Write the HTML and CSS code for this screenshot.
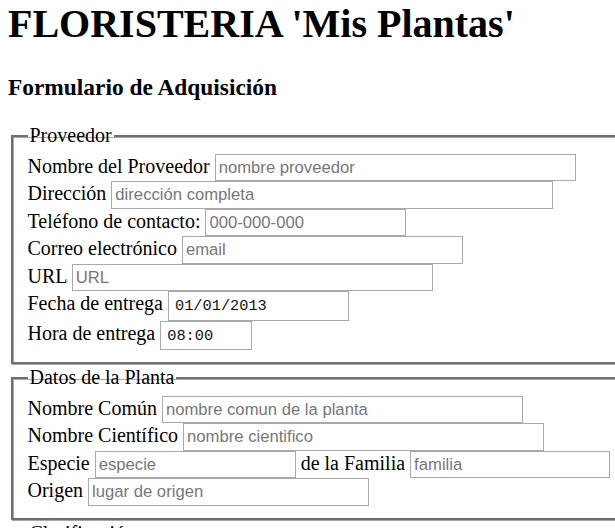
FILE: index.html
```html
<!DOCTYPE html>
<html lang="es">
<head>
<meta charset="utf-8">
<title>FLORISTERIA 'Mis Plantas'</title>
<link rel="stylesheet" href="styles.css">
</head>
<body>
<h1 class="title">FLORISTERIA 'Mis Plantas'</h1>
<h3 class="subtitle">Formulario de Adquisición</h3>
<form class="form">
  <fieldset class="group">
    <legend class="legend">Proveedor</legend>
    <div class="row">Nombre del Proveedor <input class="field w40" type="text" placeholder="nombre proveedor"></div>
    <div class="row">Dirección <input class="field w50" type="text" placeholder="dirección completa"></div>
    <div class="row">Teléfono de contacto: <input class="field w20" type="text" placeholder="000-000-000"></div>
    <div class="row">Correo electrónico <input class="field w30" type="text" placeholder="email"></div>
    <div class="row">URL <input class="field w40" type="text" placeholder="URL"></div>
    <div class="row">Fecha de entrega <input class="field mono wdate" type="text" value="01/01/2013"></div>
    <div class="row">Hora de entrega <input class="field mono wtime" type="text" value="08:00"></div>
  </fieldset>
  <fieldset class="group">
    <legend class="legend">Datos de la Planta</legend>
    <div class="row">Nombre Común <input class="field w40" type="text" placeholder="nombre comun de la planta"></div>
    <div class="row">Nombre Científico <input class="field w40" type="text" placeholder="nombre cientifico"></div>
    <div class="row">Especie <input class="field w20" type="text" placeholder="especie"> de la Familia <input class="field w20b" type="text" placeholder="familia"></div>
    <div class="row">Origen <input class="field w30" type="text" placeholder="lugar de origen"></div>
  </fieldset>
  <fieldset class="group">
    <legend class="legend">Clasificación</legend>
    <div class="row">Tipo <input class="field w30" type="text" placeholder="tipo"></div>
  </fieldset>
</form>
</body>
</html>
```

FILE: styles.css
```css
html {
  overflow: hidden;
}
body {
  margin: 0 0 0 8px;
  font-family: "Liberation Serif", "Times New Roman", serif;
  font-size: 20px;
  color: #000;
  background: #fff;
}
.title {
  font-size: 40px;
  font-weight: bold;
  margin: 0 0 27px;
}
.subtitle {
  font-size: 23.4px;
  font-weight: bold;
  margin: 27px 0 23.4px;
}
.form {
  width: 690px;
  margin: 0;
}
.group {
  display: block;
  margin: 0 2.5px 2px;
  padding: 6.5px 15px 12px;
  border: 2px solid #6e6e6e;
  box-shadow: inset 1px 1px 0 #a8a8a8, 1px 1px 0 #a8a8a8;
}
.legend {
  padding: 0 2px;
  font-size: 20px;
}
.row {
  white-space: nowrap;
}
.field {
  box-sizing: border-box;
  height: 27.5px;
  margin: 0;
  padding: 0 3px;
  border: 1px solid #a9a9a9;
  font-family: "Liberation Sans", Arial, sans-serif;
  font-size: 16.67px;
  color: #000;
  background: #fff;
  vertical-align: baseline;
}
.field::placeholder {
  color: #777;
}
.w20 { width: 201px; }
.w20b { width: 200px; }
.w30 { width: 281px; }
.w40 { width: 361px; }
.w50 { width: 442px; }
.mono {
  height: 29.5px;
  padding: 0 6px;
  font-family: "Liberation Mono", "DejaVu Sans Mono", monospace;
  font-size: 15.3px;
  color: #111;
}
.wdate { width: 181px; }
.wtime { width: 92px; }
```
